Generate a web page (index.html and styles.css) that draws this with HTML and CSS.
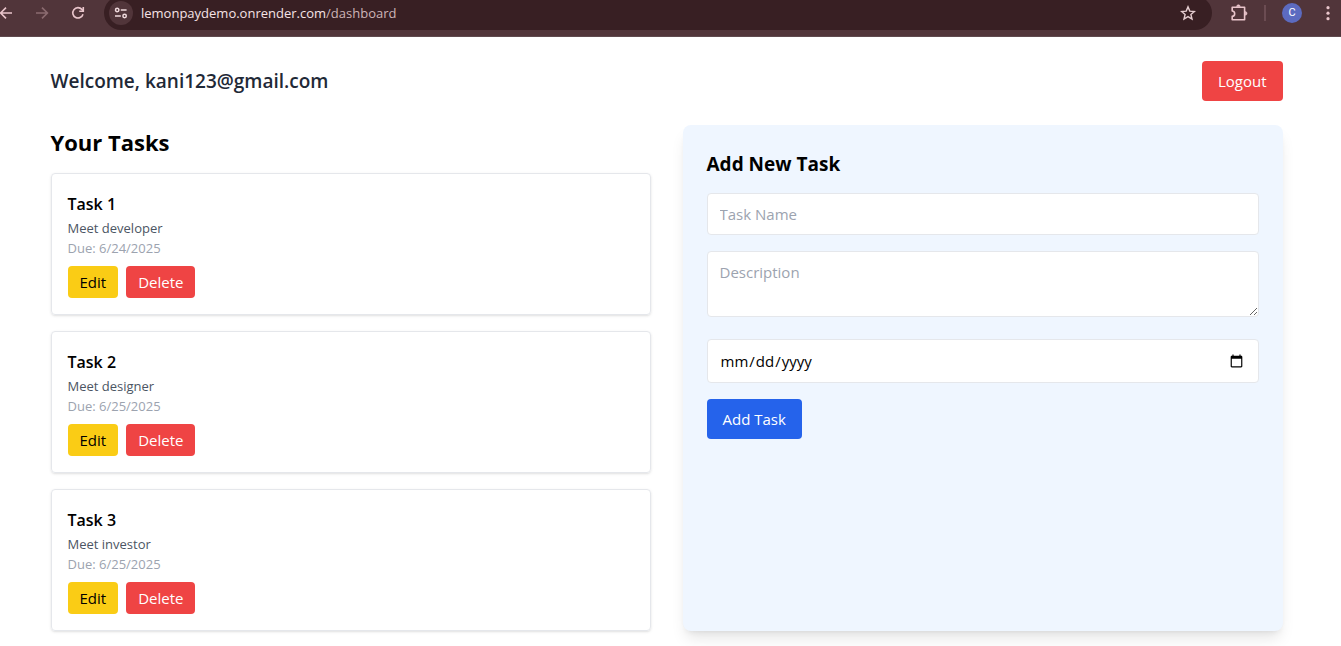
FILE: index.html
```html
<!DOCTYPE html>
<html lang="en">
<head>
<meta charset="utf-8">
<meta name="viewport" content="width=device-width, initial-scale=1">
<title>Dashboard</title>
<link rel="stylesheet" href="styles.css">
</head>
<body>
<header class="browser">
  <div class="nav">
    <button class="tool" aria-label="Back"><svg width="16" height="16" viewBox="0 0 16 16" fill="none" stroke="currentColor" stroke-width="1.6"><path d="M14 8H3M8 2.6 2.6 8 8 13.4"/></svg></button>
    <button class="tool tool-off" aria-label="Forward"><svg width="16" height="16" viewBox="0 0 16 16" fill="none" stroke="currentColor" stroke-width="1.6"><path d="M2 8h11M8 2.6 13.4 8 8 13.4"/></svg></button>
    <button class="tool" aria-label="Reload"><svg width="16" height="16" viewBox="0 0 16 16" fill="none" stroke="currentColor" stroke-width="1.6"><path d="M13 9.2A5.2 5.2 0 1 1 11.9 4.4L13.3 6"/><path d="M13.3 2v4.2H9.2"/></svg></button>
  </div>
  <div class="address">
    <button class="site-info" aria-label="Site information"><svg width="14" height="14" viewBox="0 0 14 14" fill="none" stroke="currentColor" stroke-width="1.5"><circle cx="3.2" cy="4" r="1.7"/><path d="M6.8 4H12.6M1 10h5.8"/><circle cx="10.6" cy="10" r="1.7"/></svg></button>
    <span class="url">lemonpaydemo.onrender.com<span class="path">/dashboard</span></span>
    <button class="tool star" aria-label="Bookmark"><svg width="16" height="16" viewBox="0 0 16 16" fill="none" stroke="currentColor" stroke-width="1.4"><path d="m8 1.9 1.8 4.2 4.6.4-3.5 3 1.1 4.5L8 11.6 4 14l1.1-4.5-3.5-3 4.6-.4z"/></svg></button>
  </div>
  <div class="extras">
    <button class="tool" aria-label="Extensions"><svg width="18" height="18" viewBox="0 0 18 18" fill="none" stroke="currentColor" stroke-width="1.6" stroke-linejoin="round"><path d="M2.2 3.2H14.6V15.8H2.2V12.4C5.5 12.2 5.5 7.2 2.2 7Z"/><path d="M6.6 2.6a1.8 1.8 0 0 1 3.6 0ZM15.2 7.6a1.8 1.8 0 0 1 0 3.6Z" fill="currentColor" stroke-width=".6"/></svg></button>
    <span class="divider"></span>
    <button class="avatar" aria-label="Profile">C</button>
    <button class="tool menu" aria-label="Menu"><svg width="4" height="16" viewBox="0 0 4 16" fill="currentColor"><circle cx="2" cy="2.7" r="1.6"/><circle cx="2" cy="8.2" r="1.6"/><circle cx="2" cy="13.7" r="1.6"/></svg></button>
  </div>
</header>
<div class="page">
  <div class="container">
    <div class="topbar">
      <h1 class="welcome">Welcome, kani123@gmail.com</h1>
      <button class="btn btn-red">Logout</button>
    </div>
    <main class="columns">
      <section>
        <h2 class="heading">Your Tasks</h2>
        <div class="tasks">
          <article class="card">
            <h3 class="card-title">Task 1</h3>
            <p class="description">Meet developer</p>
            <p class="due">Due: 6/24/2025</p>
            <div class="actions"><button class="btn btn-small btn-yellow">Edit</button><button class="btn btn-small btn-red">Delete</button></div>
          </article>
          <article class="card">
            <h3 class="card-title">Task 2</h3>
            <p class="description">Meet designer</p>
            <p class="due">Due: 6/25/2025</p>
            <div class="actions"><button class="btn btn-small btn-yellow">Edit</button><button class="btn btn-small btn-red">Delete</button></div>
          </article>
          <article class="card">
            <h3 class="card-title">Task 3</h3>
            <p class="description">Meet investor</p>
            <p class="due">Due: 6/25/2025</p>
            <div class="actions"><button class="btn btn-small btn-yellow">Edit</button><button class="btn btn-small btn-red">Delete</button></div>
          </article>
        </div>
      </section>
      <section class="panel">
        <h2 class="panel-title">Add New Task</h2>
        <form class="form">
          <input class="field" type="text" placeholder="Task Name" aria-label="Task Name">
          <textarea class="field area" rows="2" placeholder="Description" aria-label="Description"></textarea>
          <input class="field date" type="date" aria-label="Due date">
          <button class="btn btn-blue" type="submit">Add Task</button>
        </form>
      </section>
    </main>
  </div>
</div>
</body>
</html>
```
FILE: styles.css
```css
*, *::before, *::after { box-sizing: border-box; }
body {
  margin: 0;
  background: #fff;
  color: #000;
  font-family: "Segoe UI", "Open Sans", "Noto Sans", sans-serif;
  font-size: 15px;
  line-height: 24px;
}
h1, h2, h3, p { margin: 0; }
button, input, textarea { font: inherit; color: inherit; }
button { border: 0; padding: 0; background: none; cursor: pointer; }
svg { display: block; }

.browser {
  display: flex;
  align-items: flex-end;
  height: 37px;
  padding: 0 11px 6px 0;
  overflow: hidden;
  background: #51353a;
  border-bottom: 1px solid #5f4a4e;
  color: #e9c5cb;
}
.nav, .extras, .address { display: flex; align-items: center; height: 34px; flex-shrink: 0; }
.nav { width: 104px; gap: 20px; }
.nav .tool:first-child { margin-left: -2px; }
.tool-off { color: #8b6b70; }
.address {
  flex: 1;
  padding: 0 16px 0 5px;
  border-radius: 17px;
  background: #381f23;
}
.site-info {
  display: grid;
  place-items: center;
  width: 24px;
  height: 24px;
  border-radius: 50%;
  background: #51353a;
  color: #f0dadd;
}
.url { flex: 1; margin-left: 8px; font-size: 13px; color: #f6e3e5; }
.path { color: #cdb4b7; }
.star { color: #e5cdd0; }
.extras { padding-left: 18px; }
.divider { width: 2px; height: 16px; margin: 0 16px; background: #6b4c52; }
.avatar {
  width: 20px;
  height: 20px;
  margin-right: 24px;
  border-radius: 50%;
  background: #5c6bc0;
  color: #fff;
  font: 11px/20px Roboto, sans-serif;
}

.page { padding-right: 8px; }
.container { max-width: 1280px; margin: 0 auto; padding: 24px 24px 15px; }
.topbar { display: flex; align-items: center; justify-content: space-between; margin-bottom: 24px; }
.welcome { font-size: 19px; line-height: 28px; font-weight: 600; color: #1f2937; }
.columns { display: grid; grid-template-columns: 1fr 1fr; gap: 32px; }
.heading { margin-bottom: 14px; font-size: 22px; line-height: 34px; font-weight: 700; }
.tasks { display: grid; gap: 16px; }
.card {
  padding: 16px;
  border: 1px solid #e5e7eb;
  border-radius: 4px;
  box-shadow: 0 1px 3px rgb(0 0 0 / 10%), 0 1px 2px -1px rgb(0 0 0 / 10%);
}
.card-title { font-size: 16px; line-height: 28px; font-weight: 600; }
.description, .due { font-size: 13px; line-height: 20px; }
.description { color: #4b5563; }
.due { color: #9ca3af; }
.actions { display: flex; gap: 8px; margin-top: 8px; }

.btn { padding: 8px 16px; border-radius: 4px; color: #fff; }
.btn-small { padding: 4px 12px; }
.btn-red { background: #ef4444; }
.btn-yellow { background: #facc15; color: #000; }
.btn-blue { background: #2563eb; }

.panel {
  padding: 24px;
  border-radius: 8px;
  background: #eff6ff;
  box-shadow: 0 10px 15px -3px rgb(0 0 0 / 10%), 0 4px 6px -4px rgb(0 0 0 / 10%);
}
.panel-title { margin-bottom: 14px; font-size: 19px; line-height: 30px; font-weight: 700; }
.form { display: flex; flex-direction: column; align-items: flex-start; gap: 16px; }
.field {
  display: block;
  width: 100%;
  padding: 8px 12px;
  border: 1px solid #e5e7eb;
  border-radius: 4px;
  background: #fff;
}
.field::placeholder { color: #9ca3af; opacity: 1; }
.area { resize: vertical; margin-bottom: 6px; }
.date { height: 44px; }
```
